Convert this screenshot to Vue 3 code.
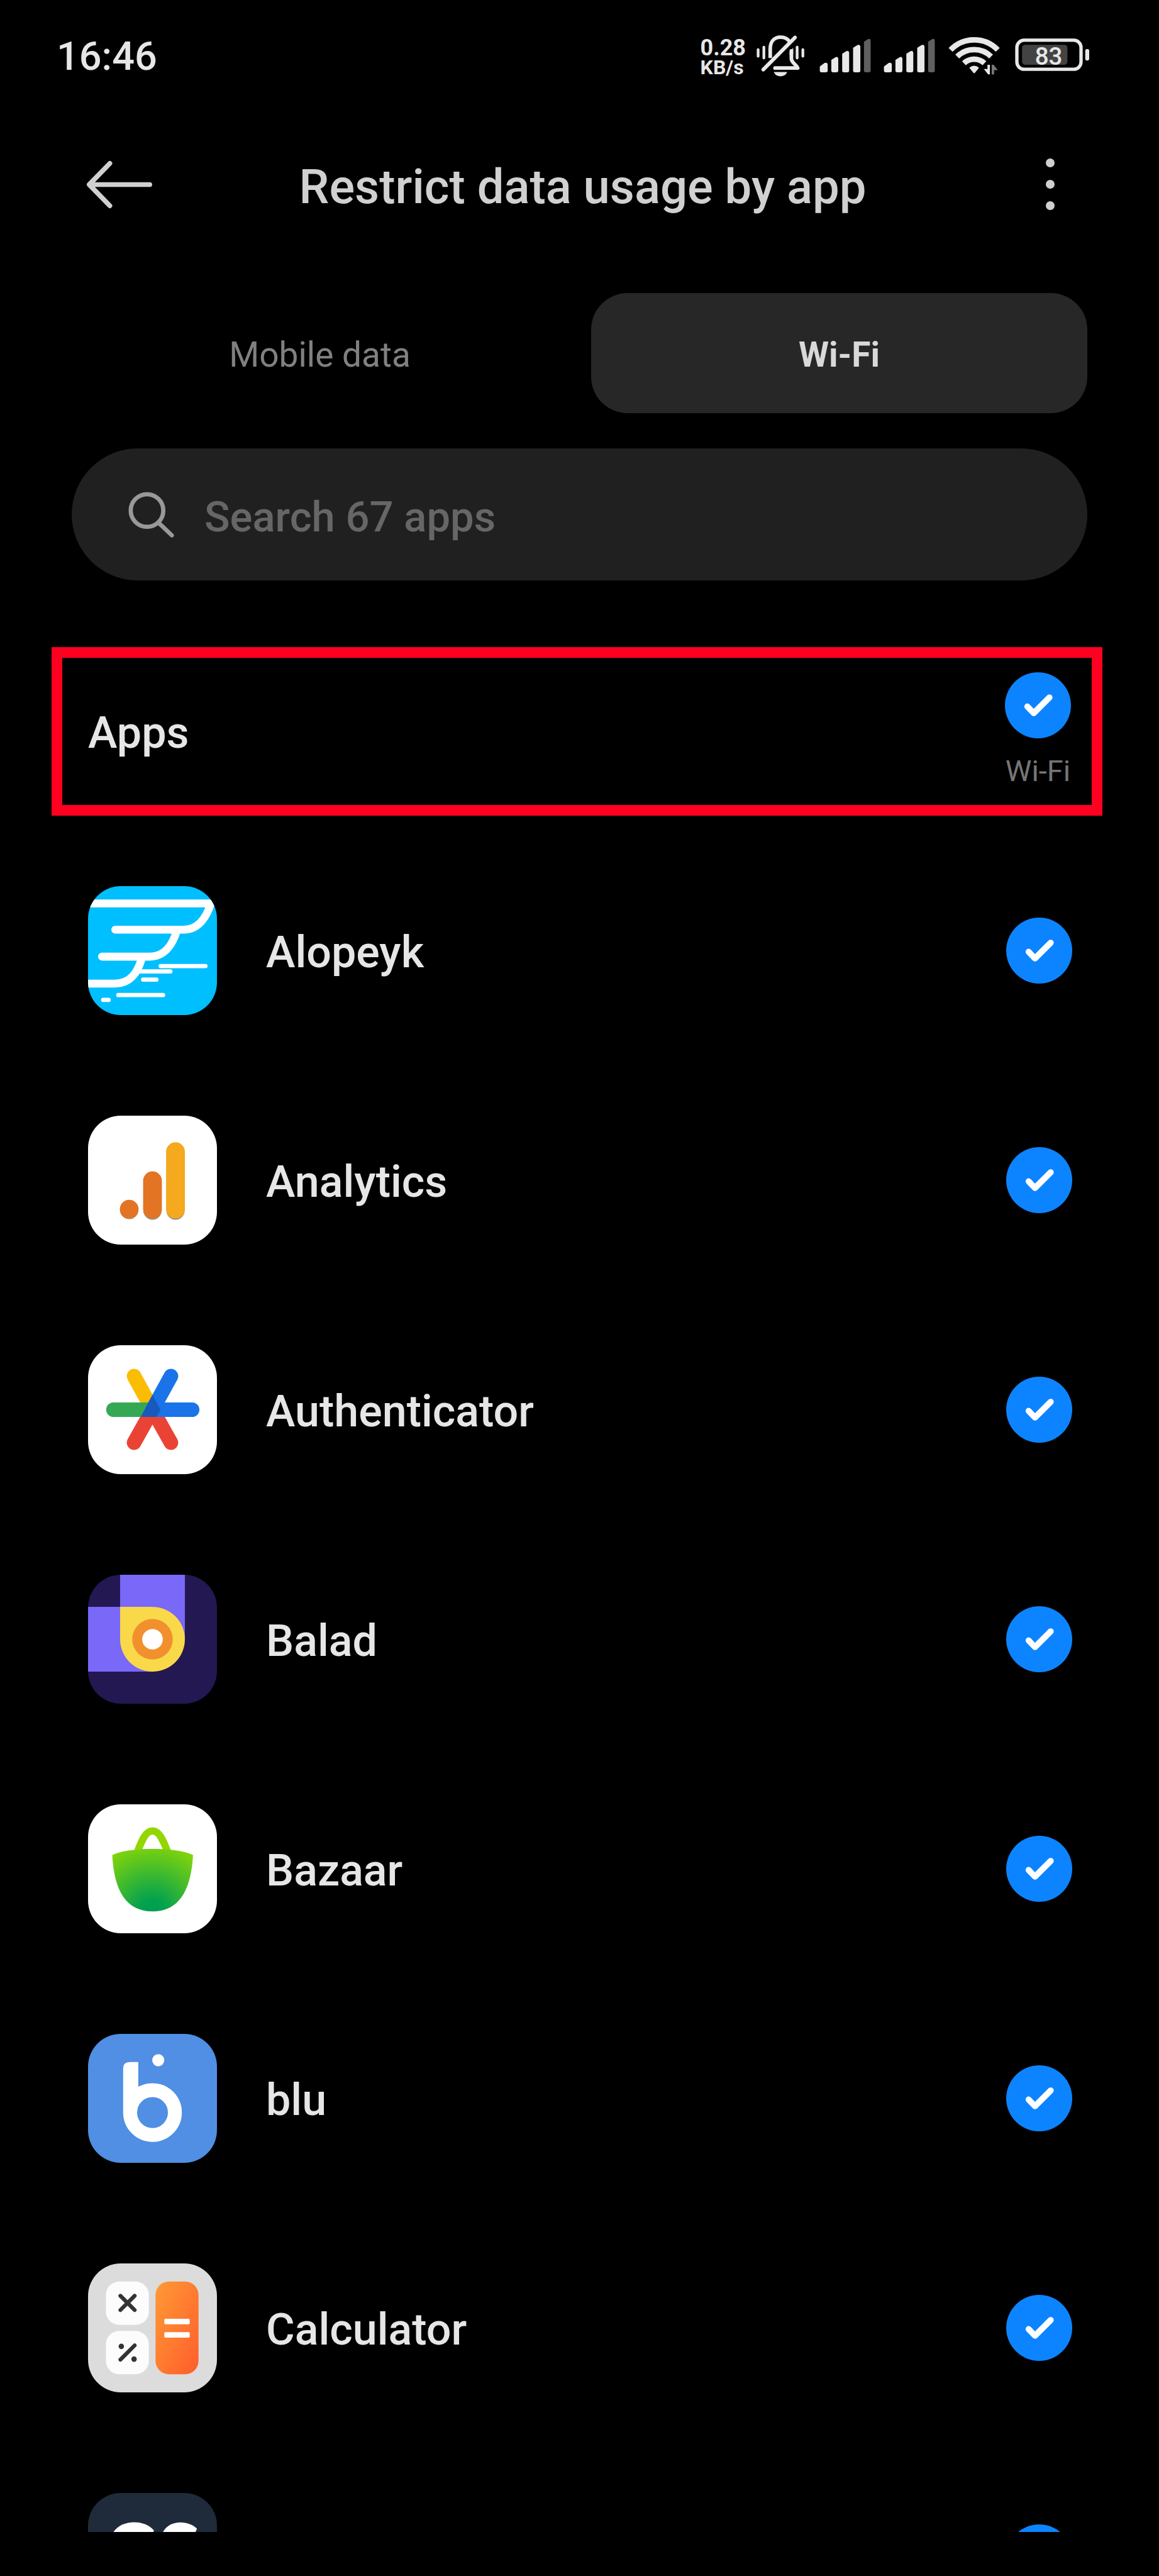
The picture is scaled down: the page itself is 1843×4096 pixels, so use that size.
<template>
  <div class="screen">
    <header class="status-bar">
      <time class="clock">16:46</time>
      <div class="status-icons">
        <div class="net-speed">
          <span class="net-value">0.28</span>
          <span class="net-unit">KB/s</span>
        </div>

        <svg class="st-bell" viewBox="1245 52 104 80" fill="none" stroke="#e8e8e8" stroke-width="6" stroke-linecap="round" stroke-linejoin="round">
          <path d="M1277 96V81C1277 68 1284 61.500 1294 61.500C1301 61.500 1306 64 1309 69" stroke-linecap="butt" />
          <path d="M1318 62L1265.500 115" />
          <path d="M1312 84V97C1312 104 1320 106 1322.500 112.500H1285" />
          <path d="M1309 86L1315 79V90H1309Z" fill="#e8e8e8" stroke="none" />
          <path d="M1283 119H1305C1303 124 1299 126 1294 126C1289 126 1285 124 1283 119Z" fill="#e8e8e8" stroke="none" />
          <path d="M1257 82V93M1266.500 78V96M1321.500 78V96M1331 82V93" stroke-width="4.500" />
        </svg>

        <svg v-for="n in 2" :key="n" class="st-signal" viewBox="0 52 106 80">
          <path d="M10 110L18 104Q23 103 23 107V117Q23 119.500 20 119.500H13Q10 119.500 10 117Z" fill="#e8e8e8" />
          <path d="M29 99L36 94.500Q40.500 93 40.500 98V117Q40.500 119.500 38 119.500H32Q29 119.500 29 117Z" fill="#e8e8e8" />
          <path d="M47 89L54 84.500Q58.500 83 58.500 88V117Q58.500 119.500 56 119.500H50Q47 119.500 47 117Z" fill="#e8e8e8" />
          <path d="M65 79L72 74.500Q77 73 77 78V117Q77 119.500 74 119.500H68Q65 119.500 65 117Z" fill="#e8e8e8" />
          <path d="M83 69L90 64.500Q94 63 94 68V117Q94 119.500 91 119.500H86Q83 119.500 83 117Z" fill="#606060" />
        </svg>

        <svg class="st-wifi" viewBox="1561 52 110 80" fill="none" stroke="#e8e8e8" stroke-width="9">
          <path d="M1575 82.500A54 54 0 0 1 1653 82.500" />
          <path d="M1586 93.500A40 40 0 0 1 1642 93.500" />
          <path d="M1597 104.500A25 25 0 0 1 1631 104.500" />
          <path d="M1606 112Q1614 105 1622 112L1615.500 120Q1614 122 1612.500 120Z" fill="#e8e8e8" stroke="none" />
          <path d="M1636 107H1640V123H1637L1630 114H1636Z" fill="#e8e8e8" stroke="none" />
          <path d="M1643 123V107H1646L1653 116H1647V123Z" fill="#777" stroke="none" />
        </svg>

        <svg class="st-battery" viewBox="1671 52 133 80">
          <rect x="1684.500" y="66.500" width="106" height="48" rx="12" fill="none" stroke="#e8e8e8" stroke-width="5.500" />
          <rect x="1693" y="74" width="75" height="33" rx="5" fill="#434343" />
          <rect x="1797.500" y="81" width="6.500" height="19" rx="3" fill="#e8e8e8" />
          <text x="1737" y="107" text-anchor="middle" class="battery-text">83</text>
        </svg>
      </div>
    </header>

    <div class="app-bar">
      <button class="icon-btn" type="button" aria-label="Back">
        <svg class="back-icon" viewBox="0 0 108 80" fill="none" stroke="#d0d0d0" stroke-width="8" stroke-linecap="round" stroke-linejoin="round">
          <path d="M104 40H5M38 5L4 40L38 75" />
        </svg>
      </button>
      <h1 class="title">Restrict data usage by app</h1>
      <button class="icon-btn menu-btn" type="button" aria-label="More options">
        <span v-for="n in 3" :key="n" class="menu-dot"></span>
      </button>
    </div>

    <div class="tabs" role="tablist">
      <button
        v-for="tab in tabs"
        :key="tab"
        class="tab"
        :class="{ active: tab === activeTab }"
        type="button"
        role="tab"
        :aria-selected="tab === activeTab"
        @click="activeTab = tab"
      >{{ tab }}</button>
    </div>

    <label class="search">
      <svg class="search-icon" viewBox="0 0 76 76" fill="none" stroke="#999" stroke-width="7" stroke-linecap="round">
        <circle cx="31" cy="31" r="27" />
        <path d="M51 52L72 72" />
      </svg>
      <input class="search-input" type="text" placeholder="Search 67 apps" aria-label="Search apps" />
    </label>

    <section class="all-apps">
      <label class="all-label" for="check-all">Apps</label>
      <div class="all-check">
        <span class="check">
          <input id="check-all" class="check-input" type="checkbox" :checked="allChecked" @change="toggleAll" />
          <svg v-show="allChecked" class="check-mark" viewBox="0 0 109 109"><path d="M37 56.500L47.500 67.500L73.500 41.500" /></svg>
        </span>
        <span class="check-caption">Wi-Fi</span>
      </div>
    </section>

    <ul class="app-list">
      <li v-for="app in apps" :key="app.id" class="app-row">
        <svg class="app-icon" viewBox="0 0 213 213">
          <g v-if="app.id === 'alopeyk'" fill="none" stroke="#fff" stroke-width="13" stroke-linecap="round">
            <rect width="213" height="213" fill="#00bfff" stroke="none" />
            <path d="M-8 28.500H203C197 48 184 72 158 72H45" stroke-linejoin="round" />
            <path d="M146 76C140 94 129 116.500 101 116.500H23" />
            <path d="M88 122C82 140 72 161 44 161H-8" />
            <path d="M120 132H194M84 141H136M91 154.500H113M50 180H124M25 188H34" stroke-width="7" />
          </g>

          <g v-else-if="app.id === 'analytics'">
            <rect width="213" height="213" fill="#fff" />
            <g fill="#a08c78">
              <circle cx="68" cy="156" r="15" />
              <rect x="91.500" y="94" width="30" height="78" rx="15" />
              <rect x="129.500" y="46" width="30" height="126" rx="15" />
            </g>
            <circle cx="68" cy="154.500" r="15.500" fill="#e37424" />
            <rect x="91" y="92" width="31" height="78" rx="15.500" fill="#e37424" />
            <rect x="129" y="44" width="31" height="126" rx="15.500" fill="#f4a91f" />
          </g>

          <g v-else-if="app.id === 'authenticator'" stroke-width="24" stroke-linecap="round">
            <rect width="213" height="213" fill="#fff" />
            <path d="M106.500 106.500L76 161M106.500 106.500L137 161" stroke="#ea4335" />
            <path d="M106.500 106.500L76 51" stroke="#fbbc04" />
            <path d="M106.500 106.500H42" stroke="#34a853" />
            <path d="M106.500 106.500H172M106.500 106.500L137 51" stroke="#1a73e8" />
            <path d="M106.500 82L120 106.500L113 118.500H87Z" fill="#185abc" stroke="none" />
          </g>

          <g v-else-if="app.id === 'balad'">
            <rect width="213" height="213" fill="#231852" />
            <path d="M53 0H160V106H106V160H0V53H53Z" fill="#7a68f8" />
            <path d="M53 53H106.500A53.500 53.500 0 1 1 53 106.500Z" fill="#f9d949" />
            <circle cx="106.500" cy="106.500" r="33.500" fill="#f2902e" />
            <circle cx="106.500" cy="106.500" r="17" fill="#fff" />
          </g>

          <g v-else-if="app.id === 'bazaar'">
            <defs>
              <radialGradient id="bag" gradientUnits="userSpaceOnUse" cx="106" cy="178" r="112">
                <stop offset="0" stop-color="#009c56" />
                <stop offset="0.2" stop-color="#05a24d" />
                <stop offset="1" stop-color="#7fd40c" />
              </radialGradient>
            </defs>
            <rect width="213" height="213" fill="#fff" />
            <path d="M82 77C89 60 95 44 106.500 44S124 60 131 77" fill="none" stroke="#93d600" stroke-width="12" />
            <path d="M40 84C52 77 80 73.500 106.500 73.500S161 77 173.500 84C170 143 150 177 106.500 177S43 143 40 84Z" fill="url(#bag)" />
          </g>

          <g v-else-if="app.id === 'blu'">
            <rect width="213" height="213" fill="#508fe3" />
            <circle cx="116" cy="43.500" r="10" fill="#fff" />
            <circle cx="106.500" cy="130" r="37" fill="none" stroke="#fff" stroke-width="23" />
            <path d="M58 130V57Q58 46.500 69 46.500H83V112L81 130Z" fill="#fff" />
          </g>

          <g v-else-if="app.id === 'calculator'">
            <defs>
              <linearGradient id="equals" x1="0" y1="0" x2="1" y2="1">
                <stop offset="0" stop-color="#ff9a34" />
                <stop offset="1" stop-color="#ff5d2c" />
              </linearGradient>
            </defs>
            <rect width="213" height="213" fill="#dcdcdc" />
            <rect x="29.500" y="30" width="71" height="71.500" rx="22" fill="#fcfcfc" />
            <rect x="29.500" y="111.500" width="71" height="71.500" rx="22" fill="#fcfcfc" />
            <rect x="111.500" y="30" width="71" height="153" rx="22" fill="url(#equals)" />
            <path d="M53.500 53.500L77 77M77 53.500L53.500 77M77 135.500L53.500 159" stroke="#333" stroke-width="6.500" stroke-linecap="round" />
            <circle cx="55" cy="137" r="4.500" fill="#333" />
            <circle cx="76" cy="158" r="4.500" fill="#333" />
            <rect x="126" y="91.500" width="42" height="9" rx="2" fill="#fff" />
            <rect x="126" y="113.500" width="42" height="9" rx="2" fill="#fff" />
          </g>

          <g v-else>
            <rect width="213" height="213" fill="#1f2b3b" />
            <path d="M41 66C54 43 94 43 109 62L105 70H41Z" fill="#fff" />
            <path d="M123 66C134 43 166 45 180 59L175 70H123Z" fill="#fff" />
          </g>
        </svg>

        <label class="app-name" :for="'check-' + app.id">{{ app.name }}</label>

        <span class="check">
          <input :id="'check-' + app.id" v-model="app.checked" class="check-input" type="checkbox" />
          <svg v-show="app.checked" class="check-mark" viewBox="0 0 109 109"><path d="M37 56.500L47.500 67.500L73.500 41.500" /></svg>
        </span>
      </li>
    </ul>

    <div class="gesture-area"></div>
  </div>
</template>

<script setup>
import { computed, reactive, ref } from "vue";

const tabs = ["Mobile data", "Wi-Fi"];
const activeTab = ref("Wi-Fi");

const apps = reactive([
  { id: "alopeyk", name: "Alopeyk", checked: true },
  { id: "analytics", name: "Analytics", checked: true },
  { id: "authenticator", name: "Authenticator", checked: true },
  { id: "balad", name: "Balad", checked: true },
  { id: "bazaar", name: "Bazaar", checked: true },
  { id: "blu", name: "blu", checked: true },
  { id: "calculator", name: "Calculator", checked: true },
  { id: "next", name: "", checked: true }
]);

const allChecked = computed(() => apps.every((app) => app.checked));

function toggleAll(ev) {
  apps.forEach((app) => {
    app.checked = ev.target.checked;
  });
}
</script>

<style>
body {
  margin: 0;
  background: #000;
}
</style>

<style scoped>
.screen {
  display: flex;
  flex-direction: column;
  height: 100vh;
  overflow: hidden;
  background: #000;
  color: #e6e6e6;
  font-family: Roboto, "Noto Sans", sans-serif;
  font-weight: 500;
}
button,
input {
  margin: 0;
  padding: 0;
  border: 0;
  background: none;
  color: inherit;
  font: inherit;
}
svg {
  display: block;
  flex: none;
}

/* status bar */
.status-bar {
  display: flex;
  flex: none;
  align-items: center;
  justify-content: space-between;
  height: 176px;
  padding: 0 111px 0 90px;
}
.clock {
  padding-top: 2px;
  font-size: 63px;
}
.status-icons {
  display: flex;
  align-items: center;
}
.net-speed {
  display: flex;
  flex-direction: column;
  padding: 8px 8px 0 0;
  line-height: 31px;
  font-weight: 700;
}
.net-value {
  font-size: 36px;
}
.net-unit {
  font-size: 32px;
}
.st-bell {
  width: 100px;
  height: 77px;
}
.st-signal {
  width: 102px;
  height: 77px;
}
.st-wifi {
  width: 106px;
  height: 77px;
}
.st-battery {
  width: 128px;
  height: 77px;
}
.battery-text {
  fill: #e8e8e8;
  font-size: 40px;
}

/* title row */
.app-bar {
  display: flex;
  flex: none;
  align-items: center;
  height: 234px;
  padding: 0 114px 0 138px;
}
.icon-btn {
  display: flex;
  flex: none;
  width: 104px;
}
.back-icon {
  width: 104px;
  height: 77px;
}
.title {
  flex: 1;
  margin: 0;
  padding-top: 8px;
  color: #d0d0d0;
  font-size: 76px;
  font-weight: 500;
  text-align: center;
}
.menu-btn {
  flex-direction: column;
  align-items: center;
  gap: 20px;
  width: 118px;
}
.menu-dot {
  width: 14px;
  height: 14px;
  border-radius: 50%;
  background: #d0d0d0;
}

/* tabs and search */
.tabs {
  display: grid;
  flex: none;
  grid-template-columns: 1fr 1fr;
  gap: 37px;
  margin: 56px 114px 0;
}
.tab {
  height: 191px;
  padding-top: 4px;
  border-radius: 58px;
  color: #808080;
  font-size: 55px;
  font-weight: 400;
}
.tab.active {
  background: #272727;
  color: #d9d9d9;
  font-weight: 700;
}
.search {
  display: flex;
  flex: none;
  align-items: center;
  gap: 48px;
  height: 210px;
  margin: 56px 114px 0;
  padding: 0 90px;
  border-radius: 105px;
  background: #202020;
}
.search-icon {
  width: 73px;
  height: 73px;
}
.search-input {
  flex: 1;
  min-width: 0;
  padding-top: 8px;
  outline: none;
  font-size: 67px;
}
.search-input::placeholder {
  color: #666;
  opacity: 1;
}

/* highlighted "Apps" row */
.all-apps {
  display: flex;
  flex: none;
  align-items: center;
  justify-content: space-between;
  box-sizing: border-box;
  height: 268px;
  margin: 106px 90px 0 82px;
  padding: 0 33px 0 41px;
  border: 17px solid #ff0020;
}
.all-label {
  padding-top: 4px;
  font-size: 70px;
}
.all-check {
  display: flex;
  flex-direction: column;
  align-items: center;
  gap: 24px;
  padding-bottom: 4px;
}
.check-caption {
  color: #757575;
  font-size: 47px;
  font-weight: 400;
  line-height: 56px;
}
.check {
  display: grid;
  flex: none;
}
.check-input {
  grid-area: 1 / 1;
  width: 105px;
  height: 105px;
  border-radius: 50%;
  background: #333;
  appearance: none;
}
.check-input:checked {
  background: #0d84ff;
}
.check-mark {
  grid-area: 1 / 1;
  width: 105px;
  height: 105px;
  fill: none;
  stroke: #fff;
  stroke-width: 10;
  stroke-linecap: round;
  stroke-linejoin: round;
  pointer-events: none;
}

/* app list */
.app-list {
  flex: 1;
  min-height: 0;
  margin: 32px 0 0;
  padding: 0 138px 0 140px;
  overflow: hidden;
  list-style: none;
}
.app-row {
  display: flex;
  align-items: center;
  height: 365px;
}
.app-icon {
  width: 205px;
  height: 205px;
  margin-right: 78px;
  border-radius: 52px;
  overflow: hidden;
}
.app-name {
  flex: 1;
  padding-top: 4px;
  font-size: 70px;
}
.gesture-area {
  flex: none;
  height: 70px;
}
</style>
